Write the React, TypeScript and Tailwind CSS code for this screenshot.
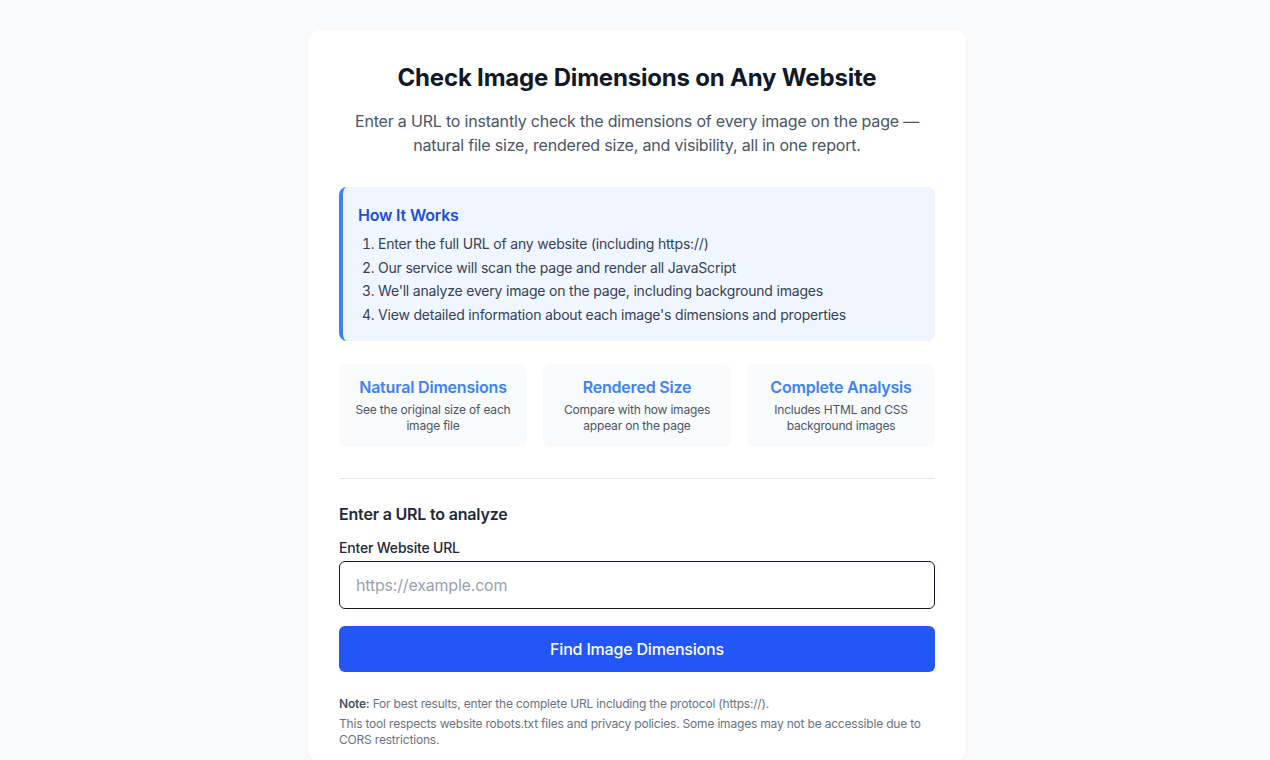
import { useState } from 'react';

const steps = [
  'Enter the full URL of any website (including https://)',
  'Our service will scan the page and render all JavaScript',
  "We'll analyze every image on the page, including background images",
  "View detailed information about each image's dimensions and properties",
];

const features = [
  { title: 'Natural Dimensions', desc: 'See the original size of each image file' },
  { title: 'Rendered Size', desc: 'Compare with how images appear on the page' },
  { title: 'Complete Analysis', desc: 'Includes HTML and CSS background images' },
];

export default function App() {
  const [url, setUrl] = useState('');

  return (
    <div className="min-h-screen bg-[#f8fafc] pt-[30px] pl-[4px] font-['Inter',sans-serif] tracking-[-0.012em] text-gray-900">
      <div className="mx-auto w-[658px] rounded-xl bg-white px-[31px] pt-[32px] pb-[14px] shadow-[0_1px_3px_rgba(0,0,0,0.06)]">
        {/* Header */}
        <h1 className="text-center text-[24px] leading-[32px] font-bold text-[#111827]">
          Check Image Dimensions on Any Website
        </h1>
        <p className="mx-auto mt-[15px] max-w-[580px] text-center text-[16px] leading-[24px] text-gray-600">
          Enter a URL to instantly check the dimensions of every image on the page — natural file size, rendered size, and visibility, all in one report.
        </p>

        {/* How it works */}
        <div className="mt-[30px] rounded-lg border-l-4 border-[#3b82f6] bg-[#eff6ff] pl-[15px] pr-4 pt-[17px] pb-[15px]">
          <h2 className="text-[16px] leading-[22px] font-semibold text-[#1d4ed8]">How It Works</h2>
          <ol className="mt-[6px] list-decimal pl-5 text-[14px] leading-[23.6px] text-gray-700">
            {steps.map((s) => (
              <li key={s}>{s}</li>
            ))}
          </ol>
        </div>

        {/* Features */}
        <div className="mt-[23px] grid grid-cols-3 gap-4">
          {features.map((f) => (
            <div key={f.title} className="rounded-lg bg-gray-50 px-[9px] pt-[12px] pb-[13px] text-center">
              <h3 className="text-[16px] leading-[22px] font-semibold text-[#3b82f6]">{f.title}</h3>
              <p className="mt-[4px] text-[12px] leading-[16px] text-gray-600">{f.desc}</p>
            </div>
          ))}
        </div>

        <hr className="mt-[31px] border-gray-200" />

        {/* Form */}
        <div className="mt-[23px]">
          <h2 className="text-[16px] leading-[24px] font-semibold text-gray-800">Enter a URL to analyze</h2>
          <label className="mt-[12px] block text-[14px] leading-[20px] font-medium text-gray-800">Enter Website URL</label>
          <input
            type="text"
            value={url}
            onChange={(e) => setUrl(e.target.value)}
            placeholder="https://example.com"
            className="mt-[3px] block h-[48px] w-full rounded-md border border-gray-900 px-4 text-[16px] text-gray-900 placeholder:text-gray-400 outline-none"
          />
          <button className="mt-[17px] h-[46px] w-full rounded-md bg-[#2356f6] text-[16px] font-medium text-white">
            Find Image Dimensions
          </button>
        </div>

        {/* Note */}
        <div className="mt-[24px] text-[12px] leading-[16px] text-gray-500">
          <p>
            <span className="font-semibold text-gray-600">Note:</span> For best results, enter the complete URL including the protocol (https://).
          </p>
          <p className="mt-[4px]">
            This tool respects website robots.txt files and privacy policies. Some images may not be accessible due to CORS restrictions.
          </p>
        </div>
      </div>
    </div>
  );
}
